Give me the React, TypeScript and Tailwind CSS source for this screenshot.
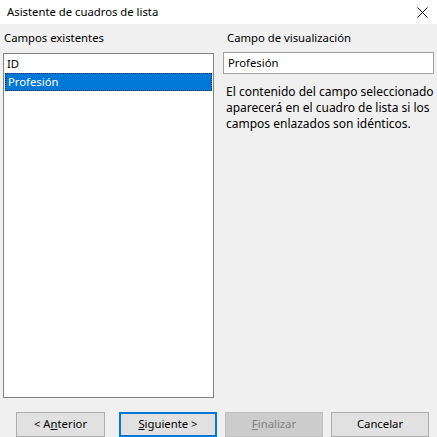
import React from "react";

export default function App() {
  const font = { fontFamily: '"Noto Sans", "Liberation Sans", sans-serif' };
  return (
    <div
      className="w-[437px] h-[437px] bg-[#f0f0f0] flex flex-col overflow-hidden text-[11.3px] text-black"
      style={font}
    >
      {/* Title bar */}
      <div className="h-[24px] bg-white flex items-center justify-between pl-[7px] pr-[8px] shrink-0">
        <span className="text-[11.3px] leading-none">Asistente de cuadros de lista</span>
        <svg width="11" height="11" viewBox="0 0 11 11" className="mr-[1px]">
          <path d="M0.5 0.5 L10.5 10.5 M10.5 0.5 L0.5 10.5" stroke="#000" strokeWidth="1" />
        </svg>
      </div>

      {/* Main */}
      <div className="flex flex-1 min-h-0 pl-[3px] pr-[4px]">
        {/* Left column */}
        <div className="w-[211px] flex flex-col shrink-0">
          <div className="h-[29px] flex items-center pl-[1px]">Campos existentes</div>
          <div className="h-[345px] bg-white border border-[#828282] flex flex-col p-[1px]">
            <div className="h-[18px] flex items-center pl-[2px]">ID</div>
            <div className="h-[18px] flex items-center pl-[2px] bg-[#0078d7] text-white border border-dotted border-[#0a2a5a]">
              Profesión
            </div>
          </div>
        </div>

        {/* Right column */}
        <div className="ml-[9px] w-[211px] flex flex-col shrink-0">
          <div className="h-[28px] flex items-center pl-[4px] pt-[1px]">Campo de visualización</div>
          <div className="h-[22px] bg-white border border-[#a0a0a0] flex items-center pl-[4px]">
            Profesión
          </div>
          <div className="pt-[10px] pl-[3px] leading-[16px] text-[12px]">
            El contenido del campo seleccionado
            <br />
            aparecerá en el cuadro de lista si los
            <br />
            campos enlazados son idénticos.
          </div>
        </div>
      </div>

      {/* Buttons */}
      <div className="h-[39px] shrink-0 flex items-start pt-[14px] pl-[16px]">
        <button className="w-[89px] h-[25px] bg-[#e1e1e1] border border-[#adadad] flex items-center justify-center">
          &lt; A<span className="underline">n</span>terior
        </button>
        <button className="ml-[14px] w-[98px] h-[25px] bg-[#e1e1e1] border-2 border-[#0078d7] flex items-center justify-center">
          <span className="underline">S</span>iguiente &gt;
        </button>
        <button className="ml-[8px] w-[98px] h-[25px] bg-[#cccccc] border border-[#bfbfbf] text-[#838383] flex items-center justify-center">
          <span className="underline">F</span>inalizar
        </button>
        <button className="ml-[8px] w-[98px] h-[25px] bg-[#e1e1e1] border border-[#adadad] flex items-center justify-center">
          Cancelar
        </button>
      </div>
    </div>
  );
}
